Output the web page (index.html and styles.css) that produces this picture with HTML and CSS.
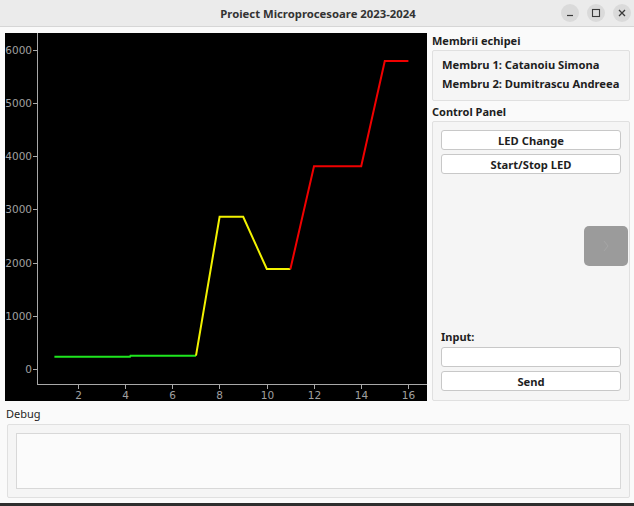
FILE: index.html
```html
<!DOCTYPE html>
<html>
<head>
<meta charset="utf-8">
<link rel="stylesheet" href="styles.css">
</head>
<body>
<div class="window">
  <header class="titlebar">
    <div class="title">Proiect Microprocesoare 2023-2024</div>
    <div class="wbtns">
      <span class="wbtn"><svg width="18" height="18" viewBox="0 0 18 18"><line x1="6" y1="11.5" x2="12" y2="11.5" stroke="#3a3a3a" stroke-width="1.2"/></svg></span>
      <span class="wbtn"><svg width="18" height="18" viewBox="0 0 18 18"><rect x="5.5" y="5.5" width="7" height="7" fill="none" stroke="#3a3a3a" stroke-width="1.1"/></svg></span>
      <span class="wbtn"><svg width="18" height="18" viewBox="0 0 18 18"><path d="M6 6 L12 12 M12 6 L6 12" stroke="#3a3a3a" stroke-width="1.3"/></svg></span>
    </div>
  </header>
  <main class="content">
    <div class="top">
      <div class="plot">
        <svg width="422" height="368" viewBox="0 0 422 368">
          <rect x="0" y="0" width="422" height="368" fill="#000"/>
          <g stroke="#a8a8a8" stroke-width="1">
            <line x1="32.5" y1="0" x2="32.5" y2="351.5"/>
            <line x1="32" y1="351.5" x2="422" y2="351.5"/>
            <line x1="28" y1="17.5" x2="32" y2="17.5"/>
            <line x1="28" y1="70.5" x2="32" y2="70.5"/>
            <line x1="28" y1="123.5" x2="32" y2="123.5"/>
            <line x1="28" y1="176.5" x2="32" y2="176.5"/>
            <line x1="28" y1="230.5" x2="32" y2="230.5"/>
            <line x1="28" y1="283.5" x2="32" y2="283.5"/>
            <line x1="28" y1="336.5" x2="32" y2="336.5"/>
            <line x1="73.5" y1="352" x2="73.5" y2="356"/>
            <line x1="120.5" y1="352" x2="120.5" y2="356"/>
            <line x1="167.5" y1="352" x2="167.5" y2="356"/>
            <line x1="214.5" y1="352" x2="214.5" y2="356"/>
            <line x1="262.5" y1="352" x2="262.5" y2="356"/>
            <line x1="309.5" y1="352" x2="309.5" y2="356"/>
            <line x1="356.5" y1="352" x2="356.5" y2="356"/>
            <line x1="403.5" y1="352" x2="403.5" y2="356"/>
          </g>
          <g class="ylab" text-anchor="end">
            <text x="27" y="21">6000</text>
            <text x="27" y="74">5000</text>
            <text x="27" y="127">4000</text>
            <text x="27" y="180">3000</text>
            <text x="27" y="234">2000</text>
            <text x="27" y="287">1000</text>
            <text x="27" y="340">0</text>
          </g>
          <g class="ylab" text-anchor="middle">
            <text x="73.5" y="366">2</text>
            <text x="120.5" y="366">4</text>
            <text x="167.5" y="366">6</text>
            <text x="214.5" y="366">8</text>
            <text x="262.5" y="366">10</text>
            <text x="309.5" y="366">12</text>
            <text x="356.5" y="366">14</text>
            <text x="403.5" y="366">16</text>
          </g>
          <polyline fill="none" stroke="#1ee61e" stroke-width="2" points="49.4,323.7 125,323.7 125.5,322.7 191,322.7"/>
          <polyline fill="none" stroke="#f2f200" stroke-width="2" points="191,322.7 214.6,183.8 238.2,183.8 261.8,236 285.4,236"/>
          <polyline fill="none" stroke="#f00000" stroke-width="2" points="285.4,236 309,133.3 356.2,133.3 379.8,28 403.4,28"/>
        </svg>
      </div>
      <aside class="side">
        <div class="label">Membrii echipei</div>
        <div class="group members">
          <div>Membru 1: Catanoiu Simona</div>
          <div>Membru 2: Dumitrascu Andreea</div>
        </div>
        <div class="label cp">Control Panel</div>
        <div class="group control">
          <button class="btn">LED Change</button>
          <button class="btn">Start/Stop LED</button>
          <div class="spacer">
            <div class="led"><svg width="10" height="16" viewBox="0 0 10 16"><path d="M3 3 L7 8 L3 13" fill="none" stroke="#a6a6a6" stroke-width="1"/></svg></div>
          </div>
          <div class="inlabel">Input:</div>
          <div class="input"></div>
          <button class="btn last">Send</button>
        </div>
      </aside>
    </div>
    <div class="label dbg">Debug</div>
    <div class="group debug">
      <div class="textarea"></div>
    </div>
  </main>
  <div class="edge"></div>
</div>
</body>
</html>
```
FILE: styles.css
```css
* { box-sizing: border-box; }
html, body { margin: 0; padding: 0; }
body {
  width: 634px;
  height: 506px;
  overflow: hidden;
  background: #fafafa;
  font-family: "Noto Sans", "Open Sans", sans-serif;
  color: #1e1e1e;
}
.window { display: flex; flex-direction: column; height: 506px; }
.titlebar {
  height: 27px;
  flex: none;
  background: #ebebeb;
  border-bottom: 1px solid #d6d6d6;
  display: flex;
  align-items: center;
  justify-content: center;
  position: relative;
}
.title {
  font-weight: bold;
  font-size: 11.3px;
  color: #333;
  padding-left: 2px;
}
.wbtns {
  position: absolute;
  right: 3px;
  top: 4px;
  display: flex;
  gap: 8px;
}
.wbtn {
  width: 18px;
  height: 18px;
  border-radius: 50%;
  background: #dadada;
  display: flex;
}
.content {
  flex: 1;
  display: flex;
  flex-direction: column;
  padding: 6px 4px 0 5px;
}
.top { display: flex; gap: 5px; }
.plot { width: 422px; height: 368px; flex: none; }
.plot svg { display: block; }
.ylab { font-family: "DejaVu Sans", sans-serif; font-size: 10.5px; fill: #a0a0a0; }
.side {
  width: 198px;
  display: flex;
  flex-direction: column;
}
.label {
  font-weight: bold;
  font-size: 11px;
  height: 17px;
  line-height: 17px;
  margin-top: -1px;
}
.label.cp { margin-top: 2px; }
.group {
  background: #f5f5f5;
  border: 1px solid #e0e0e0;
  border-radius: 2px;
}
.members {
  height: 51px;
  padding: 4px 0 0 9px;
  font-weight: bold;
  font-size: 11.2px;
  line-height: 19px;
  margin-top: 1px;
}
.control {
  margin-top: 1px;
  height: 280px;
  display: flex;
  flex-direction: column;
  padding: 8px 8px 9px 8px;
}
.btn {
  font-family: "Noto Sans", "Open Sans", sans-serif;
  font-weight: bold;
  font-size: 11.2px;
  height: 20px;
  flex: none;
  padding: 0;
  background: #ffffff;
  border: 1px solid #c8c8c8;
  border-radius: 3px;
  color: #1e1e1e;
  margin-bottom: 4px;
  width: 100%;
}
.btn.last { margin-bottom: 0; }
.spacer {
  flex: 1;
  display: flex;
  align-items: center;
  justify-content: flex-end;
  margin-right: -7px;
  padding-bottom: 14px;
}
.led {
  width: 44px;
  height: 40px;
  background: #9b9b9b;
  border-radius: 5px;
  display: flex;
  align-items: center;
  justify-content: center;
}
.inlabel {
  font-weight: bold;
  font-size: 11px;
  height: 17px;
  line-height: 17px;
  margin-bottom: 2px;
}
.input {
  height: 20px;
  flex: none;
  background: #fff;
  border: 1px solid #c8c8c8;
  border-radius: 3px;
  margin-bottom: 4px;
}
.label.dbg { font-weight: normal; font-size: 11px; margin-top: 4px; height: 18px; padding-left: 1px; }
.debug {
  margin-top: 1px;
  height: 74px;
  margin-left: 2px;
  padding: 8px 8px 8px 8px;
  width: 623px;
}
.textarea {
  height: 100%;
  background: #fbfbfb;
  border: 1px solid #d8d8d8;
}
.edge { height: 3px; background: #2e2e2e; margin-top: auto; flex: none; }
```
